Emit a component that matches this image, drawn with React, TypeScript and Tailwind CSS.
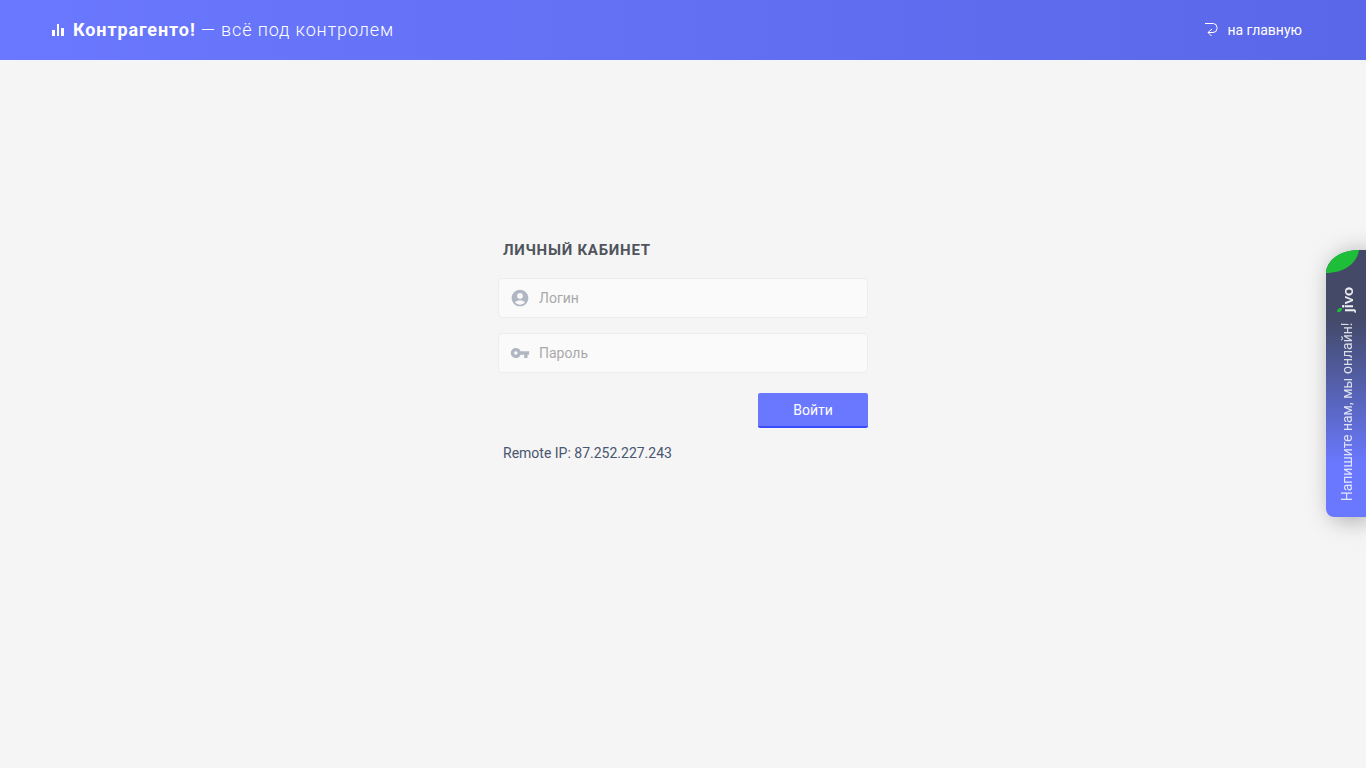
import { MdAccountCircle, MdVpnKey } from "react-icons/md";
import type { ReactNode } from "react";

interface FieldProps {
  id: string;
  type: string;
  label: string;
  icon: ReactNode;
}

const Field = ({ id, type, label, icon }: FieldProps) => (
  <div className="flex items-center h-10 rounded-sm border border-[#ededed] bg-[#fafafa]">
    <label htmlFor={id} aria-label={label} className="w-10 pl-[11px] text-[#b0b7c2]">
      {icon}
    </label>
    <input
      id={id}
      name={id}
      type={type}
      placeholder={label}
      className="flex-1 min-w-0 h-full bg-transparent text-sm text-[#495670] placeholder:text-[#a9a9a9] outline-none"
    />
  </div>
);

const Header = () => (
  <header className="h-[60px] flex items-center justify-between pl-[52px] pr-16 bg-linear-to-r from-[#6a78ff] to-[#5a67e8] text-white">
    <a href="/" className="flex items-center gap-2 text-lg font-light tracking-wider">
      <svg width="13" height="12" viewBox="0 0 13 12" fill="currentColor" aria-hidden="true">
        <path d="M0 6h3v6H0zM5 0h2v12H5zM9 4h3v8H9z" />
      </svg>
      <span>
        <b className="font-bold">Контрагенто!</b> — всё под контролем
      </span>
    </a>
    <a href="/" className="flex items-center gap-2 text-sm">
      <svg width="14" height="14" viewBox="0 0 14 14" fill="none" stroke="currentColor" aria-hidden="true">
        <path d="M0 .5h8.5a4 4 0 0 1 3.5 4v1a4 4 0 0 1-4 4H3M7 6 3 9.5 6.5 13" />
      </svg>
      на главную
    </a>
  </header>
);

const ChatWidget = () => (
  <button
    type="button"
    className="fixed right-0 top-[250px] w-10 h-[267px] pt-9 pb-4 pl-0.5 flex justify-center items-end rounded-tl-[33px_23px] rounded-bl-lg bg-linear-to-b from-[#434967] from-25% to-[#6a78ff] to-80% text-white/80 shadow-[6px_2px_24px_rgba(0,0,0,0.35)]"
  >
    <svg className="absolute left-0 top-0" width="33" height="23" viewBox="0 0 33 23" aria-hidden="true">
      <path d="M0 23C1 9 15 0 33 0 31 14 17 23 0 23Z" fill="#1ebe39" />
    </svg>
    <span className="flex items-center gap-2.5 rotate-180 [writing-mode:vertical-rl] text-sm leading-5">
      <span className="whitespace-nowrap">Напишите нам, мы онлайн!</span>
      <span className="relative font-[Lato,sans-serif] text-base leading-5 font-bold text-white/90">
        ȷivo
        <svg className="absolute right-0 top-0" width="5" height="5" viewBox="0 0 5 5" aria-hidden="true">
          <path d="M0 4C0 1 2 0 5 0 5 3 3 5 0 4Z" fill="#1ebe39" />
        </svg>
      </span>
    </span>
  </button>
);

const App = () => (
  <div className="min-h-screen bg-[#f5f5f5] font-[Roboto,sans-serif]">
    <Header />
    <main className="px-4 pt-[178px]">
      <form onSubmit={(e) => e.preventDefault()} className="mx-auto max-w-[370px] flex flex-col">
        <h1 className="px-[5px] mb-4 text-[15px] leading-6 font-bold tracking-wider text-[#50545c]">
          ЛИЧНЫЙ КАБИНЕТ
        </h1>
        <div className="flex flex-col gap-[15px]">
          <Field id="login" type="text" label="Логин" icon={<MdAccountCircle size={20} />} />
          <Field id="password" type="password" label="Пароль" icon={<MdVpnKey size={20} />} />
        </div>
        <button
          type="submit"
          className="self-end mt-5 w-[110px] h-[35px] rounded-xs border-b-2 border-[#3b4cff] bg-[#6a78ff] text-sm text-white"
        >
          Войти
        </button>
        <p className="px-[5px] mt-[15px] text-sm text-[#495670]">Remote IP: 87.252.227.243</p>
      </form>
    </main>
    <ChatWidget />
  </div>
);

export default App;
